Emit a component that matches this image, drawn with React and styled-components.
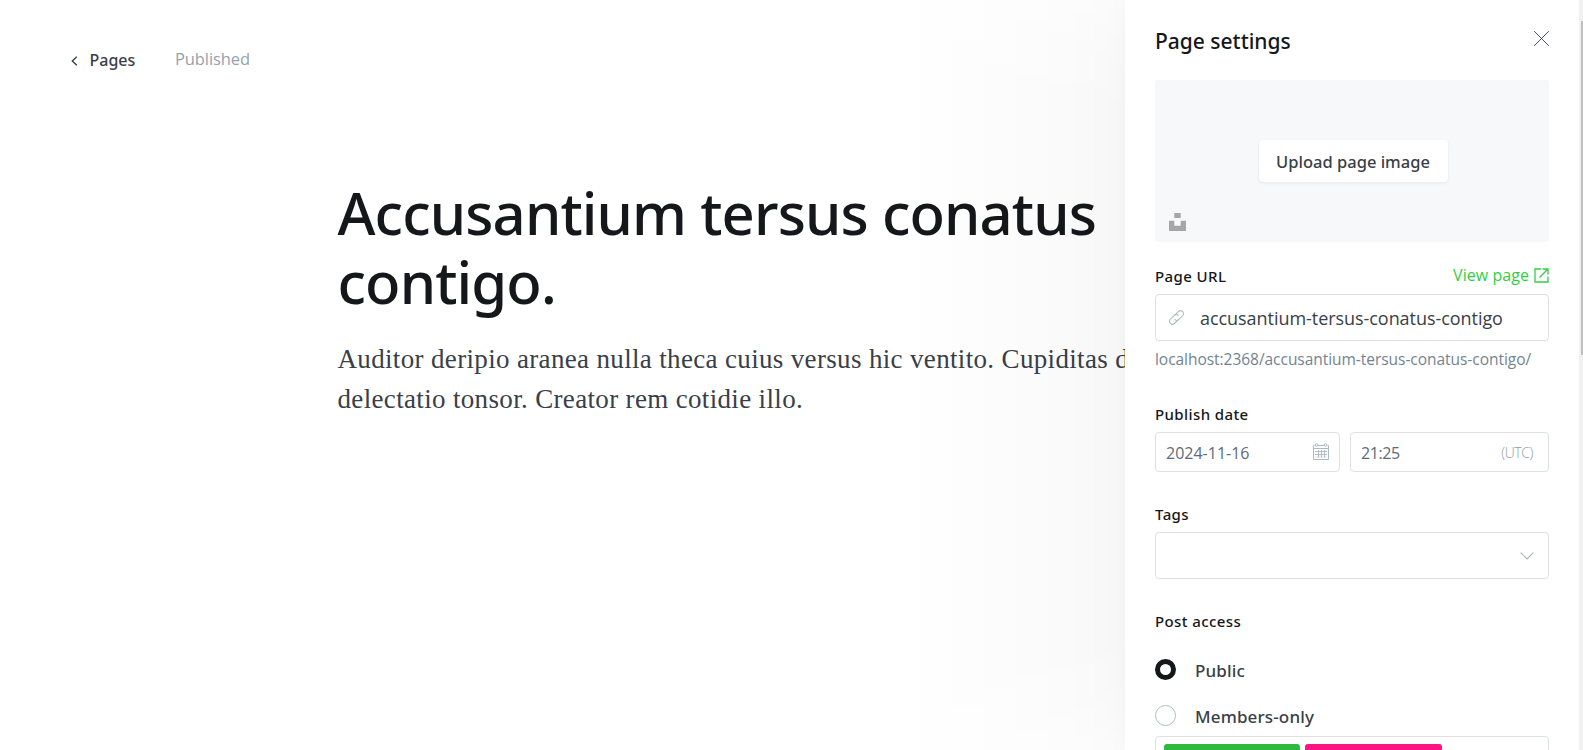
import React from 'react';
import styled, { createGlobalStyle, css } from 'styled-components';

const sans = '"Noto Sans", "Open Sans", sans-serif';
const text = '"Open Sans", "Noto Sans", sans-serif';

const GlobalStyle = createGlobalStyle`
  *, *::before, *::after { box-sizing: border-box; }
  body { margin: 0; background: #fff; overflow: hidden; }
`;

const Page = styled.div`
  position: relative;
  height: 750px;
  overflow: hidden;
  background: #fff;
`;

const TopBar = styled.header`
  display: flex;
  align-items: flex-start;
  height: 178px;
  padding: 48px 0 0 71px;
`;

const BackLink = styled.a`
  display: flex;
  align-items: center;
  gap: 11.5px;
  width: 104px;
  font: 500 16px/24px ${sans};
  color: #394047;
  svg { margin-top: 2px; }
`;

const Status = styled.span`
  margin-top: -1px;
  font: 400 16.5px/24px ${text};
  letter-spacing: -0.1px;
  color: #95a1ad;
`;

const Editor = styled.main`
  padding-left: 337.5px;
`;

const Title = styled.h1`
  margin: 0 0 23px;
  font: 500 58px/69px ${sans};
  letter-spacing: -0.88px;
  color: #15171a;
  white-space: nowrap;
`;

const Paragraph = styled.p`
  margin: 0;
  font: 400 27px/40px "Liberation Serif", serif;
  letter-spacing: 0.34px;
  color: #394047;
  white-space: nowrap;
`;

const Panel = styled.aside`
  position: absolute;
  top: 0;
  right: 0;
  display: flex;
  width: 458px;
  height: 750px;
  background: #fff;
  box-shadow: 0 0 14px rgba(0, 0, 0, 0.02);

  /* wide soft shade cast by the panel, fading towards its corners */
  &::before {
    content: '';
    position: absolute;
    top: 0;
    right: 100%;
    width: 220px;
    height: 100%;
    pointer-events: none;
    background: linear-gradient(
      to left,
      rgba(0, 0, 0, 0.038) 0,
      rgba(0, 0, 0, 0.029) 22px,
      rgba(0, 0, 0, 0.021) 60px,
      rgba(0, 0, 0, 0.010) 125px,
      rgba(0, 0, 0, 0.002) 190px,
      rgba(0, 0, 0, 0) 220px
    );
    mask-image: linear-gradient(
      rgba(0, 0, 0, 0.5) 0,
      rgba(0, 0, 0, 0.75) 40px,
      rgba(0, 0, 0, 0.93) 90px,
      #000 150px,
      #000 calc(100% - 150px),
      rgba(0, 0, 0, 0.93) calc(100% - 90px),
      rgba(0, 0, 0, 0.75) calc(100% - 40px),
      rgba(0, 0, 0, 0.5) 100%
    );
  }
`;

const PanelBody = styled.div`
  width: 454px;
  height: 750px;
  padding: 28px 30px 0;
  overflow: hidden;
`;

const ScrollTrack = styled.div`
  width: 4px;
  padding: 21px 0 0 2px;
  background: #f1f1f1;
`;

const ScrollThumb = styled.div`
  height: 334px;
  background: #c1c1c1;
`;

const PanelHeader = styled.div`
  display: flex;
  justify-content: space-between;
  align-items: flex-start;
  height: 52px;
  svg { margin-top: 3px; }
`;

const PanelTitle = styled.h4`
  margin: 0;
  font: 500 21px/26px ${sans};
  color: #15171a;
`;

const Cover = styled.div`
  display: grid;
  grid-template-rows: 60px 42px 1fr;
  height: 162px;
  margin-bottom: 24px;
  padding: 0 14px;
  border-radius: 3px;
  background: #f7f8fa;
`;

const UploadButton = styled.button`
  grid-row: 2;
  justify-self: center;
  width: 189px;
  height: 42px;
  margin-left: 3px;
  padding: 2px 1px 0 0;
  border: 0;
  border-radius: 4px;
  background: #fff;
  box-shadow: 0 1px 3px rgba(0, 0, 0, 0.08);
  font: 500 16.5px/40px ${sans};
  color: #394047;
`;

const Unsplash = styled.svg`
  grid-row: 3;
  margin-top: 31px;
`;

const Field = styled.section`
  margin-bottom: ${(p) => p.$gap}px;
`;

const LabelRow = styled.div`
  display: flex;
  justify-content: space-between;
  height: ${(p) => p.$height || 28}px;
`;

const Label = styled.label`
  font: 500 15px/20px ${sans};
  letter-spacing: 0.4px;
  color: #15171a;
`;

const ViewLink = styled.a`
  display: flex;
  gap: 5px;
  margin-top: -1px;
  height: 20px;
  font: 400 16px/21px ${text};
  letter-spacing: 0.05px;
  color: #30cf43;
  svg { margin-top: 3px; }
`;

const inputBox = css`
  display: flex;
  align-items: center;
  border: 1px solid #dce0e3;
  border-radius: 4px;
  background: #fff;
`;

const UrlInput = styled.div`
  ${inputBox}
  height: 47px;
  padding-left: 12px;
  gap: 15px;
  font: 400 18px/26px ${text};
  letter-spacing: -0.05px;
  color: #394047;
`;

const Hint = styled.p`
  margin: 8px 0 0;
  font: 400 15.5px/20px ${text};
  letter-spacing: -0.04px;
  color: #738393;
`;

const DateRow = styled.div`
  display: grid;
  grid-template-columns: 185px 199px;
  gap: 10px;
`;

const DateInput = styled.div`
  ${inputBox}
  justify-content: space-between;
  height: 40px;
  padding: 2px ${(p) => p.$right}px 0 10px;
  font: 400 16px/22px ${text};
  letter-spacing: ${(p) => p.$tracking || 0}px;
  color: #5d6b78;
  svg { margin-top: -3px; }
`;

const Zone = styled.span`
  font: 300 14px/20px ${text};
  color: #8e9cac;
`;

const Select = styled.div`
  ${inputBox}
  justify-content: flex-end;
  height: 47px;
  padding-right: 14px;
`;

const RadioRow = styled.div`
  display: flex;
  height: 21px;
  margin-bottom: ${(p) => p.$gap}px;
  gap: 19px;
`;

const Radio = styled.span`
  width: 21px;
  height: 21px;
  border: ${(p) => (p.$on ? '5px solid #15171a' : '1px solid #aebbc7')};
  border-radius: 50%;
`;

const RadioLabel = styled.span`
  margin-top: 1px;
  font: 500 17px/21px ${sans};
  letter-spacing: 0.15px;
  color: #394047;
`;

const TierBox = styled.div`
  ${inputBox}
  align-items: flex-start;
  height: 47px;
  padding: 7px 8px;
  gap: 5px;
`;

const Tier = styled.span`
  width: ${(p) => p.$width}px;
  height: 31px;
  border-radius: 3px;
  background: ${(p) => p.$color};
`;

const ChevronLeft = () => (
  <svg width="7" height="10" viewBox="0 0 7 10" fill="none" stroke="#394047" strokeWidth="1.4">
    <path d="M5.8.7 1.3 5l4.5 4.3" />
  </svg>
);

const Close = () => (
  <svg width="15" height="15" viewBox="0 0 15 15" fill="none" stroke="#394047" strokeWidth=".9">
    <path d="M.2.2l14.600 14.600M14.800.2.2 14.800" />
  </svg>
);

const External = () => (
  <svg width="15" height="15" viewBox="0 0 15 15" fill="none" stroke="#30cf43" strokeWidth="1.3">
    <path d="M7 1H1v13h13V8.500M5.500 9.500 14 1M8.500 1H14v5.500" />
  </svg>
);

const Link = () => (
  <svg width="17" height="17" viewBox="0 0 24 24" fill="none" stroke="#b4babf" strokeWidth="1.5" strokeLinecap="round">
    <path d="M9.500 9 15 3.200a4.300 4.300 0 0 1 6 6L15.500 14.800a4.300 4.300 0 0 1-6 0" />
    <path d="M14.500 15 9 20.800a4.300 4.300 0 0 1-6-6L8.500 9.200a4.300 4.300 0 0 1 6 0" />
  </svg>
);

const Calendar = () => (
  <svg width="16" height="17" viewBox="0 0 16 17" fill="none" stroke="#adb9c5">
    <path d="M1.500 2.500h-1v14h15v-14h-1M5 2.500h6M.5 5.500h15" />
    <circle cx="3.500" cy="2" r="1.300" />
    <circle cx="12.500" cy="2" r="1.300" />
    <path d="M2 8.500h12M2 11.500h12M5.500 7v7.500M8.500 7v7.500M11.500 7v7.500" strokeWidth=".9" />
    <path d="M2 14h12" strokeWidth=".4" />
  </svg>
);

const ChevronDown = () => (
  <svg width="14" height="8" viewBox="0 0 14 8" fill="none" stroke="#aab5c0" strokeWidth="1.2">
    <path d="M.7.7 7 7 13.300.7" />
  </svg>
);

export default function App() {
  return (
    <>
      <GlobalStyle />
      <Page>
        <TopBar>
          <BackLink><ChevronLeft />Pages</BackLink>
          <Status>Published</Status>
        </TopBar>
        <Editor>
          <Title>Accusantium tersus conatus<br />contigo.</Title>
          <Paragraph>
            Auditor deripio aranea nulla theca cuius versus hic ventito. Cupiditas d
            <br />
            delectatio tonsor. Creator rem cotidie illo.
          </Paragraph>
        </Editor>
        <Panel>
          <PanelBody>
            <PanelHeader>
              <PanelTitle>Page settings</PanelTitle>
              <Close />
            </PanelHeader>
            <Cover>
              <UploadButton>Upload page image</UploadButton>
              <Unsplash width="17" height="18" viewBox="0 0 17 18" fill="#a6a6a6">
                <path d="M5.300 0h6.400v5H5.300zM0 7.700h5.300v5h6.400v-5H17V18H0z" />
              </Unsplash>
            </Cover>
            <Field $gap={35}>
              <LabelRow>
                <Label>Page URL</Label>
                <ViewLink>View page<External /></ViewLink>
              </LabelRow>
              <UrlInput><Link />accusantium-tersus-conatus-contigo</UrlInput>
              <Hint>localhost:2368/accusantium-tersus-conatus-contigo/</Hint>
            </Field>
            <Field $gap={32}>
              <LabelRow><Label>Publish date</Label></LabelRow>
              <DateRow>
                <DateInput $right={10}>2024-11-16<Calendar /></DateInput>
                <DateInput $right={15} $tracking={-0.4}>21:25<Zone>(UTC)</Zone></DateInput>
              </DateRow>
            </Field>
            <Field $gap={32}>
              <LabelRow><Label>Tags</Label></LabelRow>
              <Select><ChevronDown /></Select>
            </Field>
            <Field $gap={0}>
              <LabelRow $height={48}><Label>Post access</Label></LabelRow>
              <RadioRow $gap={25}><Radio $on /><RadioLabel>Public</RadioLabel></RadioRow>
              <RadioRow $gap={10}><Radio /><RadioLabel>Members-only</RadioLabel></RadioRow>
              <TierBox>
                <Tier $width={136} $color="#2dba3e" />
                <Tier $width={137} $color="#ff1382" />
              </TierBox>
            </Field>
          </PanelBody>
          <ScrollTrack><ScrollThumb /></ScrollTrack>
        </Panel>
      </Page>
    </>
  );
}
